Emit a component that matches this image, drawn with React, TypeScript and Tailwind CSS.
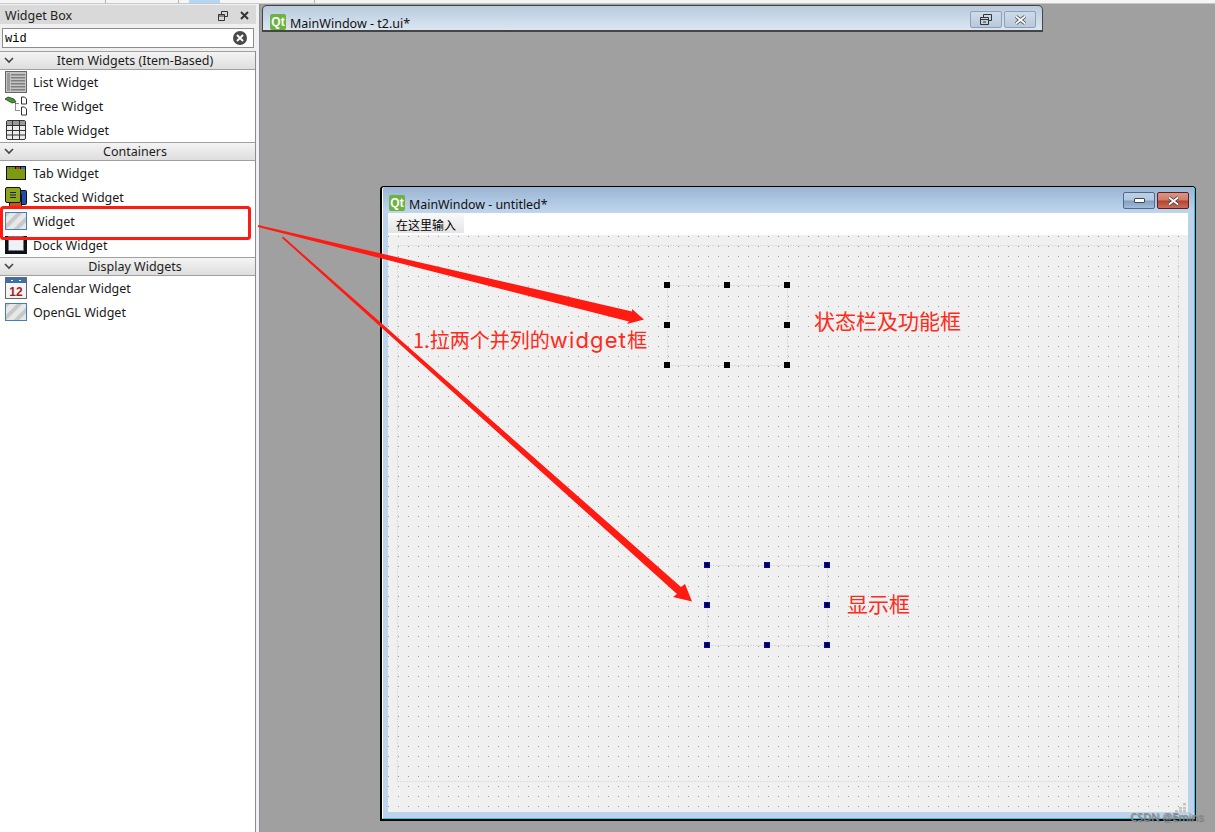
import React from 'react'

const uiFont = "font-['Noto_Sans','Liberation_Sans',sans-serif]"
const redText = "pointer-events-none absolute font-['Noto_Sans_CJK_SC',sans-serif] leading-[30px] text-[#ff2a1a]"

function SlashIcon() {
  return (
    <svg width="22" height="18" viewBox="0 0 22 18">
      <defs>
        <pattern id="slash" width="9" height="9" patternUnits="userSpaceOnUse" patternTransform="rotate(-45)">
          <rect width="9" height="4.5" fill="#c8c8c8" />
          <rect y="4.5" width="9" height="4.5" fill="#e8e8e8" />
        </pattern>
      </defs>
      <rect x="0.5" y="0.5" width="21" height="17" fill="url(#slash)" stroke="#3f7fc4" />
    </svg>
  )
}

function ListIcon() {
  return (
    <svg width="22" height="22" viewBox="0 0 22 22">
      <rect x="0.5" y="0.5" width="21" height="21" fill="#c4c4c4" stroke="#666" />
      <rect x="2" y="2" width="3" height="18" fill="#9a9a9a" />
      {[3, 6, 9, 12, 15, 18].map((y) => (
        <rect key={y} x="6" y={y} width="14" height="1.5" fill="#7f7f7f" />
      ))}
    </svg>
  )
}

function TreeIcon() {
  return (
    <svg width="24" height="20" viewBox="0 0 24 20">
      <path d="M1 3l3-2 6 2 2 3-4 1z" fill="#3f9a2e" stroke="#222" strokeWidth="0.7" />
      <path d="M11.5 7.5h4M11.5 7.5v7h4" stroke="#222" strokeDasharray="1 1" fill="none" />
      <path d="M17.5 1h3l2 2v5h-5zM17.5 11h3l2 2v6h-5z" fill="#fff" stroke="#333" />
    </svg>
  )
}

function TableIcon() {
  return (
    <svg width="20" height="20" viewBox="0 0 20 20">
      <rect x="0.5" y="0.5" width="19" height="19" rx="1.5" fill="#ececec" stroke="#333" />
      <rect x="1" y="1" width="18" height="4" fill="#9a9a9a" />
      <path d="M1 5.5h18M1 10.5h18M1 15h18M6.5 1v18M13.5 1v18" stroke="#333" />
    </svg>
  )
}

function TabIcon() {
  return (
    <svg width="20" height="14" viewBox="0 0 20 14">
      <rect width="20" height="14" fill="#111" />
      <rect x="1" y="3" width="18" height="10" fill="#7c9a12" />
      <rect x="1" y="1" width="8" height="2" fill="#6f8f10" />
      <rect x="10" y="1" width="4" height="2" fill="#c9342a" />
      <rect x="15" y="1" width="4" height="2" fill="#2f6fc9" />
    </svg>
  )
}

function StackedIcon() {
  return (
    <svg width="22" height="20" viewBox="0 0 22 20">
      <rect x="9.5" y="3.5" width="12" height="14" rx="1" fill="#1f4fa8" stroke="#111" />
      <rect x="4.5" y="6.5" width="12" height="13" rx="1" fill="#c4541c" stroke="#111" />
      <rect x="0.5" y="0.5" width="15" height="15" rx="1.5" fill="#8fa61c" stroke="#111" />
      <path d="M5 5.5h6M5 8h6M5 10.5h6" stroke="#123" />
    </svg>
  )
}

function DockIcon() {
  return (
    <svg width="22" height="18" viewBox="0 0 22 18">
      <rect width="22" height="18" fill="#111" />
      <rect x="3.5" y="0.5" width="15" height="14" fill="#eef1f6" stroke="#5577aa" strokeDasharray="2 2" />
    </svg>
  )
}

function CalendarIcon() {
  return (
    <svg width="22" height="22" viewBox="0 0 22 22">
      <rect x="0.5" y="0.5" width="21" height="21" fill="#f4f4f4" stroke="#666" />
      <rect x="1" y="1" width="20" height="5" fill="#3f6fa8" />
      <rect x="6" y="3" width="2" height="1" fill="#fff" />
      <rect x="14" y="3" width="2" height="1" fill="#fff" />
      <text x="11" y="19" textAnchor="middle" fontSize="12" fontWeight="700" fill="#a51d1d" fontFamily="Liberation Sans">12</text>
    </svg>
  )
}

function QtLogo() {
  return (
    <span className="mr-[4px] flex h-4 w-4 shrink-0 items-center justify-center rounded-[2px] bg-[#6cb33f] font-['Liberation_Sans',sans-serif] text-[12px] font-bold leading-none text-white">
      Qt
    </span>
  )
}

function CloseGlyph() {
  return (
    <svg width="13" height="10" viewBox="0 0 13 10">
      <path d="M2 1.5l9 7M11 1.5l-9 7" stroke="#3a3a4a" strokeWidth="3.4" />
      <path d="M2 1.5l9 7M11 1.5l-9 7" stroke="#fff" strokeWidth="1.8" />
    </svg>
  )
}

function Category({ title }: { title: string }) {
  return (
    <div className="relative flex h-[19px] items-center justify-center border-y border-[#a0a0a0] bg-gradient-to-b from-[#f4f4f4] to-[#dedede] pl-[15px] pt-[1px] text-[12.5px] leading-none text-[#1c1c1c]">
      <svg className="absolute left-[4px] top-[5px]" width="10" height="7" viewBox="0 0 10 7">
        <path d="M1 1l4 4 4-4" fill="none" stroke="#444" strokeWidth="1.6" />
      </svg>
      {title}
    </div>
  )
}

function Item({ icon, label }: { icon: React.ReactNode; label: string }) {
  return (
    <div className="flex h-6 items-center text-[12.5px] leading-none text-[#1a1a1a]">
      <span className="flex w-[33px] justify-center pl-[1px] pr-[2px]">{icon}</span>
      <span className="pt-[2px]">{label}</span>
    </div>
  )
}

function WidgetBox() {
  return (
    <aside className="flex w-[256px] shrink-0 flex-col bg-[#f0f0f0]">
      <div className="mt-[1px] flex h-[19px] items-center justify-between bg-[#d9d9d9] pl-[5px] pr-[7px] pt-[2px] text-[12.5px] leading-none text-[#222]">
        <span className="pt-[2px]">Widget Box</span>
        <span className="flex items-center gap-[12px]">
          <svg width="10" height="10" viewBox="0 0 10 10">
            <path d="M3.5 3V.5h6v5H7M.5 3.5h6v6h-6zM.5 5h6" fill="none" stroke="#333" />
          </svg>
          <svg width="9" height="9" viewBox="0 0 9 9">
            <path d="M1 1l7 7M8 1l-7 7" stroke="#333" strokeWidth="2" />
          </svg>
        </span>
      </div>
      <div className="mx-[2px] mt-[4px] flex h-[20px] items-center justify-between border border-[#8c8c8c] bg-white pl-[2px] pr-[6px]">
        <span className="pt-[2px] font-['Liberation_Mono',monospace] text-[12px] leading-none text-black">wid</span>
        <span className="flex h-[14px] w-[14px] items-center justify-center rounded-full bg-[#4a4a4a]">
          <svg width="8" height="8" viewBox="0 0 8 8">
            <path d="M1 1l6 6M7 1l-6 6" stroke="#fff" strokeWidth="2" />
          </svg>
        </span>
      </div>
      <div className="mt-[3px] flex-1 border-r border-[#8c8c8c] bg-white">
        <Category title="Item Widgets (Item-Based)" />
        <div>
          <Item icon={<ListIcon />} label="List Widget" />
          <Item icon={<TreeIcon />} label="Tree Widget" />
          <Item icon={<TableIcon />} label="Table Widget" />
        </div>
        <Category title="Containers" />
        <div>
          <Item icon={<TabIcon />} label="Tab Widget" />
          <Item icon={<StackedIcon />} label="Stacked Widget" />
          <Item icon={<SlashIcon />} label="Widget" />
          <Item icon={<DockIcon />} label="Dock Widget" />
        </div>
        <Category title="Display Widgets" />
        <div>
          <Item icon={<CalendarIcon />} label="Calendar Widget" />
          <Item icon={<SlashIcon />} label="OpenGL Widget" />
        </div>
      </div>
    </aside>
  )
}

function Handles({ left, top, edge }: { left: number; top: number; edge: string }) {
  const xs = [0, 60, 120]
  const ys = [0, 40, 80]
  return (
    <g>
      <rect x={left + 3.5} y={top + 3.5} width="120" height="80" fill="none" stroke="#c4c4c4" strokeDasharray="1 2" />
      {ys.map((y) =>
        xs.map((x) =>
          x === 60 && y === 40 ? null : (
            <rect key={`${x}-${y}`} x={left + x + 0.5} y={top + y + 0.5} width="5" height="5" fill="#000" stroke={edge} />
          )
        )
      )}
    </g>
  )
}

function FormWindow() {
  return (
    <div className="absolute left-[120px] top-[182px] h-[635px] w-[816px] rounded-t-[4px] border-t border-r border-b-2 border-l-2 border-black">
      <div className="flex h-full flex-col rounded-t-[3px] border-r border-b border-l border-r-[#2fc4e4] border-b-[#2fc4e4] border-l-white bg-[#bcd3ec]">
        <div className="flex h-[26px] shrink-0 rounded-t-[3px] bg-gradient-to-b from-[#9ab5d3] to-[#c0d6ee] pl-[6px] pr-[5px] text-[12.4px] leading-none text-[#111]">
          <span className="mb-[2px] flex items-center self-end">
            <QtLogo />
            <span className="pt-[4px]">MainWindow - untitled*</span>
          </span>
          <span className="ml-auto mt-[5px] flex gap-[2px] self-start">
            <span className="flex h-[17px] w-[32px] items-center justify-center rounded-[2px] border border-[#4f6a8c] bg-[linear-gradient(#bccfe4_0%,#b4c9e0_48%,#7f9fc2_52%,#a3bcd8_100%)]">
              <span className="h-[5px] w-[11px] rounded-[1px] border border-[#445] bg-white" />
            </span>
            <span className="flex h-[17px] w-[32px] items-center justify-center rounded-[2px] border border-[#5a1f22] bg-[linear-gradient(#dc9484_0%,#d07c6c_48%,#b8402a_52%,#c4705c_100%)]">
              <CloseGlyph />
            </span>
          </span>
        </div>
        <div className="mb-[6px] ml-[5px] mr-[6px] flex flex-1 flex-col">
          <div className="h-[22px] shrink-0 bg-white">
            <span className="flex h-[20px] w-[76px] items-center justify-center bg-gradient-to-b from-[#fafafa] to-[#e4e4e4] pt-[3px] font-['Noto_Sans_CJK_SC',sans-serif] text-[12px] leading-none text-black">
              在这里输入
            </span>
          </div>
          <div className="relative flex-1 bg-[#f0f0f0]">
            <svg className="absolute inset-0" width="800" height="578">
              <defs>
                <pattern id="grid" x="0" y="1" width="10" height="10" patternUnits="userSpaceOnUse">
                  <rect width="1" height="1" fill="#9a9a9a" />
                </pattern>
              </defs>
              <rect width="800" height="578" fill="url(#grid)" />
              <rect x="9.5" y="10.5" width="781" height="536" fill="none" stroke="#c8c8c8" strokeDasharray="1 2" />
              <Handles left={276} top={47} edge="#000" />
              <Handles left={316} top={327} edge="#0000e0" />
              {[[795, 568], [791, 572], [795, 572], [787, 575], [791, 575], [795, 575]].map(([x, y]) => (
                <rect key={`${x}-${y}`} x={x} y={y} width="3" height="2.5" fill="#c4c4c4" />
              ))}
            </svg>
          </div>
        </div>
      </div>
    </div>
  )
}

function SubWindow() {
  return (
    <div className="absolute left-[2px] top-[1px] flex h-[27px] w-[781px] rounded-t-[5px] border border-b-2 border-[#444] bg-gradient-to-b from-[#b9cbdd] to-[#dbe6f1] pl-[7px] pr-[6px] text-[12.5px] leading-none text-[#111]">
      <span className="flex items-center self-end">
        <QtLogo />
        <span className="pt-[4px]">MainWindow - t2.ui*</span>
      </span>
      <span className="ml-auto mt-[5px] flex gap-[2px] self-start">
        <span className="flex h-[17px] w-[32px] items-center justify-center rounded-[2px] border border-[#8ca0b8] bg-gradient-to-b from-[#cfdbe8] to-[#b9c9da]">
          <svg width="12" height="11" viewBox="0 0 12 11">
            <path d="M3.5 3V.5h8v6H8.5M.5 3.5h8v7h-8zM.5 5.5h8M3 8h3" fill="none" stroke="#333" />
          </svg>
        </span>
        <span className="flex h-[17px] w-[32px] items-center justify-center rounded-[2px] border border-[#8ca0b8] bg-gradient-to-b from-[#cfdbe8] to-[#b9c9da]">
          <CloseGlyph />
        </span>
      </span>
    </div>
  )
}

function Annotations() {
  return (
    <svg className="pointer-events-none absolute inset-0" width="1215" height="832">
      <rect x="1.5" y="207.5" width="248" height="31" rx="2" fill="none" stroke="#ff1a12" strokeWidth="3" />
      <polygon points="258,225 632,311.5 632,309 644,319.5 627,324 629,321.5 258,227" fill="#ff1a12" />
      <polygon points="283,236.5 681,587 685,584 692,601.5 673,597 677,594 282,238" fill="#ff1a12" />
    </svg>
  )
}

export default function App() {
  return (
    <div className={`relative flex h-[832px] w-[1215px] flex-col overflow-hidden bg-[#f0f0f0] ${uiFont}`}>
      <div className="relative h-[4px] shrink-0 border-b border-[#c8c8c8] bg-[#f5f5f5]">
        <span className="absolute left-[105px] top-0 h-[3px] w-px bg-[#b0b0b0]" />
        <span className="absolute left-[178px] top-0 h-[3px] w-px bg-[#b0b0b0]" />
        <span className="absolute left-[189px] top-0 h-[3px] w-[31px] bg-[#b5d5f5]" />
        <span className="absolute left-[314px] top-0 h-[3px] w-px bg-[#b0b0b0]" />
      </div>
      <div className="flex min-h-0 flex-1">
        <WidgetBox />
        <main className="relative ml-[3px] flex-1 border-l border-[#8a8f9e] bg-[#a0a0a0]">
          <SubWindow />
          <FormWindow />
        </main>
      </div>
      <Annotations />
      <div className={`${redText} left-[413px] top-[325px] text-[20px]`}>
        1.拉两个并列的<span className="font-['Inter',sans-serif] text-[22px] tracking-[1.2px]">widget</span>框
      </div>
      <div className={`${redText} left-[814px] top-[305px] text-[21px]`}>状态栏及功能框</div>
      <div className={`${redText} left-[847px] top-[588px] text-[21px]`}>显示框</div>
      <div className="pointer-events-none absolute left-[1130px] top-[810px] text-[11px] leading-[14px] text-[#8a8a8a] [text-shadow:1px_1px_1px_#777]">
        CSDN @Emins
      </div>
    </div>
  )
}
